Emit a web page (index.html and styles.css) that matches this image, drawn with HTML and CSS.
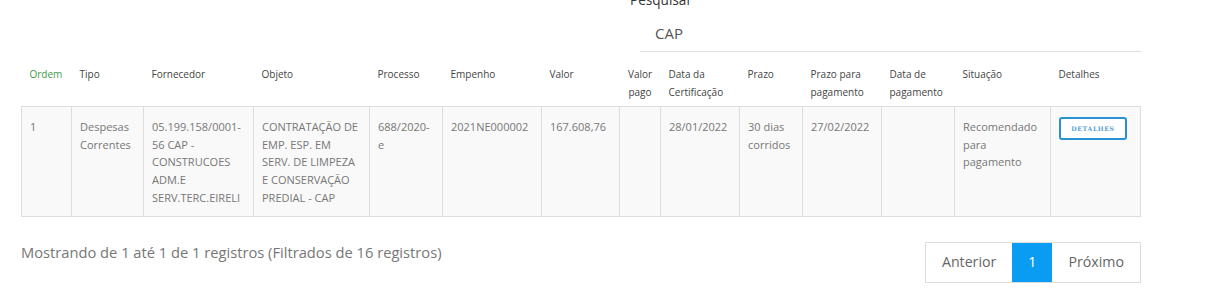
FILE: index.html
```html
<!DOCTYPE html>
<html lang="pt-BR">
<head>
<meta charset="utf-8">
<title>Despesas</title>
<link rel="stylesheet" href="styles.css">
</head>
<body>
<div class="page">
  <div class="search">
    <label class="search-label" for="q">Pesquisar</label>
    <input id="q" class="search-input" type="text" value="CAP">
  </div>
  <table class="grid">
    <colgroup>
      <col style="width:50px"><col style="width:72px"><col style="width:110px"><col style="width:116px">
      <col style="width:73px"><col style="width:99px"><col style="width:78px"><col style="width:41px">
      <col style="width:79px"><col style="width:63px"><col style="width:79px"><col style="width:73px">
      <col style="width:96px"><col style="width:90px">
    </colgroup>
    <thead>
      <tr>
        <th class="sorted">Ordem</th>
        <th>Tipo</th>
        <th>Fornecedor</th>
        <th>Objeto</th>
        <th>Processo</th>
        <th>Empenho</th>
        <th>Valor</th>
        <th class="center">Valor pago</th>
        <th>Data da Certificação</th>
        <th>Prazo</th>
        <th>Prazo para pagamento</th>
        <th>Data de pagamento</th>
        <th>Situação</th>
        <th>Detalhes</th>
      </tr>
    </thead>
    <tbody>
      <tr>
        <td>1</td>
        <td>Despesas Correntes</td>
        <td>05.199.158/0001-56 CAP - CONSTRUCOES ADM.E SERV.TERC.EIRELI</td>
        <td>CONTRATAÇÃO DE EMP. ESP. EM SERV. DE LIMPEZA E CONSERVAÇÃO PREDIAL - CAP</td>
        <td>688/2020-e</td>
        <td>2021NE000002</td>
        <td>167.608,76</td>
        <td></td>
        <td>28/01/2022</td>
        <td>30 dias corridos</td>
        <td>27/02/2022</td>
        <td></td>
        <td>Recomendado para pagamento</td>
        <td><button class="btn-details" type="button">DETALHES</button></td>
      </tr>
    </tbody>
  </table>
  <div class="footer">
    <div class="info">Mostrando de 1 até 1 de 1 registros (Filtrados de 16 registros)</div>
    <div class="pager">
      <span class="page-item">Anterior</span>
      <span class="page-item active">1</span>
      <span class="page-item">Próximo</span>
    </div>
  </div>
</div>
</body>
</html>
```
FILE: styles.css
```css
* { box-sizing: border-box; }
html, body { margin: 0; padding: 0; background: #fff; }
body {
  font-family: "Open Sans", "Liberation Sans", sans-serif;
  color: #777;
}
.page {
  width: 1141px;
  padding-left: 21px;
}
.search {
  margin-left: 609px;
  margin-top: -9px;
  display: flex;
  flex-direction: column;
}
.search-label {
  font-size: 13.6px;
  line-height: 18px;
  color: #333;
}
.search-input {
  margin-left: 10px;
  margin-top: 6px;
  height: 37px;
  border: 0;
  border-bottom: 1px solid #ddd;
  padding: 0 0 0 15px;
  font-family: "Open Sans", sans-serif;
  font-size: 15px;
  color: #555;
  outline: none;
  background: transparent;
}
.grid {
  margin-top: 5px;
  width: 1120px;
  table-layout: fixed;
  border-collapse: collapse;
}
.grid th {
  text-align: left;
  font-weight: 400;
  font-size: 10px;
  line-height: 18px;
  color: #444;
  padding: 8px 8px 5px;
  vertical-align: top;
}
.grid th.sorted { color: #3e9c4a; }
.grid th.center { text-align: center; }
.grid td {
  background: #f9f9f9;
  border: 1px solid #ddd;
  font-size: 11px;
  line-height: 17.7px;
  color: #777;
  padding: 11px 8px 9px;
  vertical-align: top;
  word-wrap: break-word;
}
.btn-details {
  display: block;
  width: 68px;
  height: 23px;
  margin-top: -1px;
  border: 2px solid #2a92d2;
  border-radius: 3px;
  background: #fff;
  color: #5a9fd6;
  font-family: "DejaVu Serif", serif;
  font-weight: 700;
  font-size: 6.2px;
  letter-spacing: 0.6px;
  padding: 0;
}
.footer {
  margin-top: 25px;
  width: 1120px;
  display: flex;
  justify-content: space-between;
  align-items: flex-start;
}
.info {
  font-size: 14.7px;
  line-height: 20px;
  color: #777;
}
.pager {
  display: flex;
  border: 1px solid #ddd;
}
.page-item {
  padding: 9px 16px 10px;
  font-size: 14.2px;
  line-height: 20px;
  color: #666;
}
.page-item.active {
  background: #0a9bf3;
  color: #fff;
}
```
